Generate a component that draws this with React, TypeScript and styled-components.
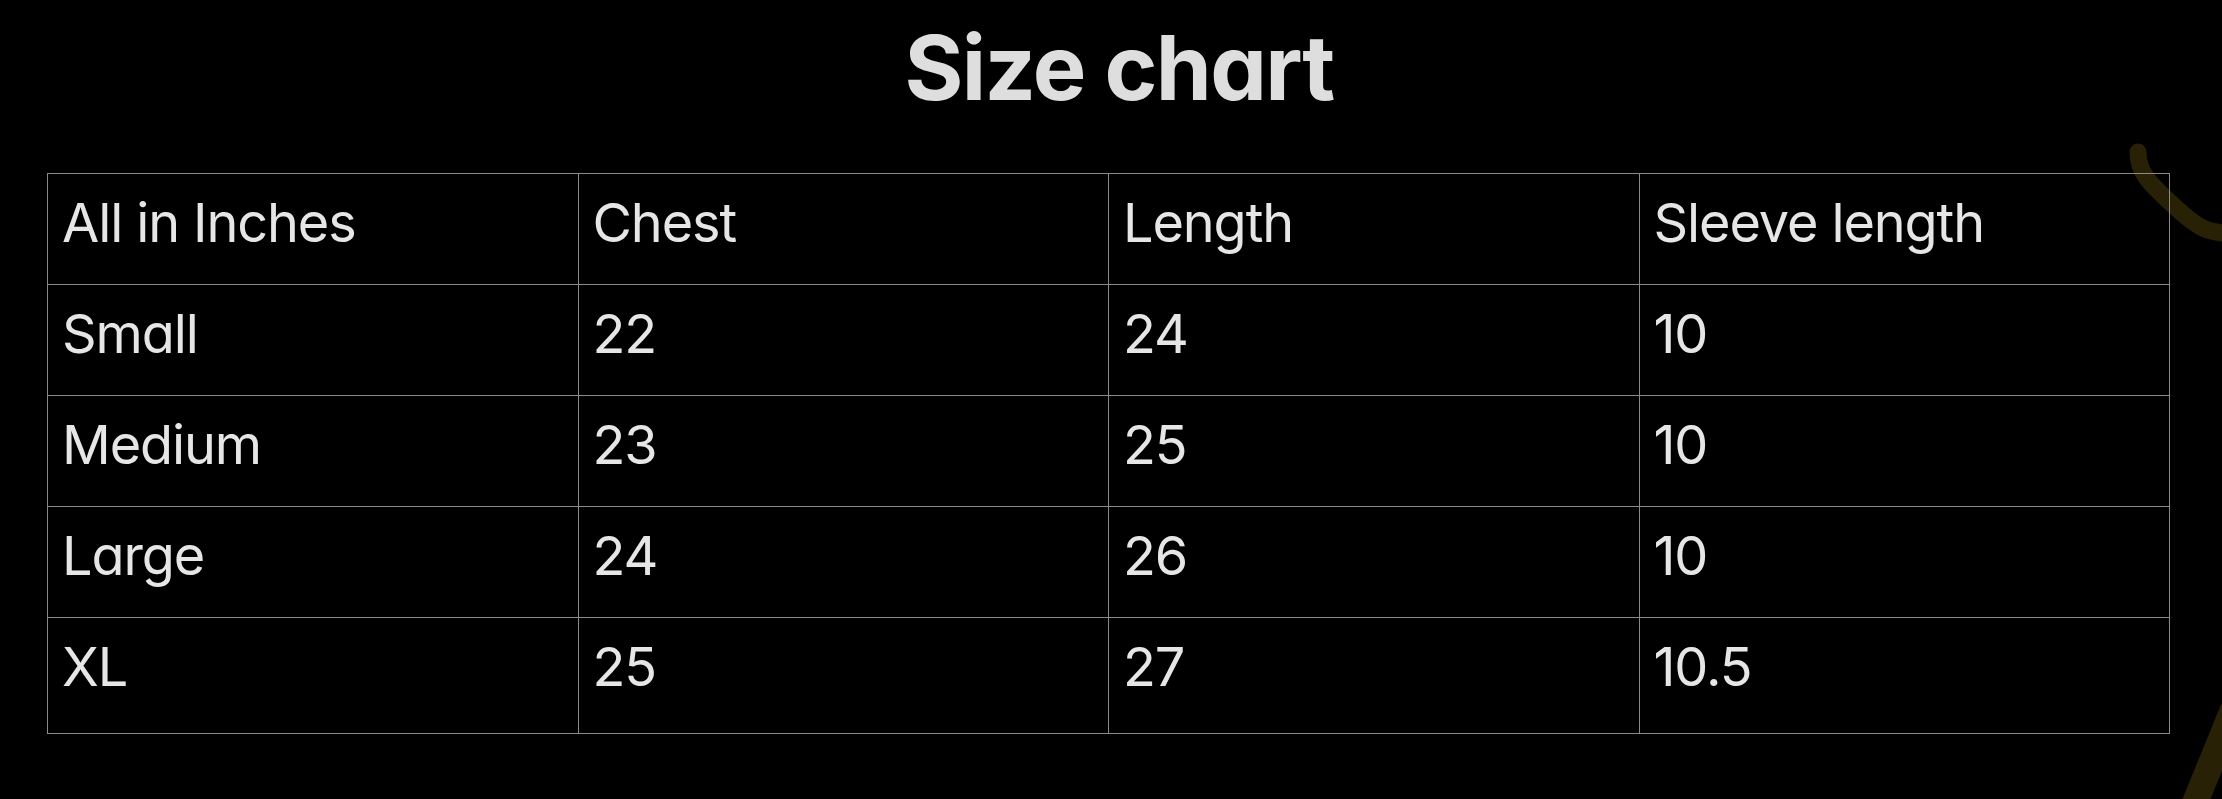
import React from "react";
import styled, { createGlobalStyle } from "styled-components";

const GlobalStyle = createGlobalStyle`
  html, body {
    margin: 0;
    padding: 0;
    background: #000;
  }
  body {
    font-family: Inter, "Noto Sans", "Liberation Sans", sans-serif;
    font-feature-settings: "cv11" 1;
    color: #e6e6e6;
  }
`

const Page = styled.div`
  position: relative;
  width: 2222px;
  height: 799px;
  overflow: hidden;
  background: #000;
`

const Title = styled.h1`
  margin: 0;
  padding: 13px 0 0 16px;
  text-align: center;
  font-size: 90px;
  line-height: 109px;
  font-weight: 700;
  color: #dedede;
  letter-spacing: -1.6px;
`

const Table = styled.table`
  position: relative;
  z-index: 1;
  margin: 51px 0 0 47px;
  width: 2123px;
  border-collapse: collapse;
  table-layout: fixed;
`

const Cell = styled.td<{ $h: number }>`
  height: ${p => p.$h}px;
  box-sizing: border-box;
  padding: 16px 14px 0;
  vertical-align: top;
  border: 1px solid #8a8a8a;
  font-size: 54px;
  line-height: 66px;
  font-weight: 400;
  letter-spacing: -1.1px;
  color: #e6e6e6;
  white-space: nowrap;
`

const Stroke = styled.svg`
  position: absolute;
  top: 0;
  right: 0;
  pointer-events: none;
`

const rows = [
  ["All in Inches", "Chest", "Length", "Sleeve length"],
  ["Small", "22", "24", "10"],
  ["Medium", "23", "25", "10"],
  ["Large", "24", "26", "10"],
  ["XL", "25", "27", "10.5"],
]

export default function App() {
  return (
    <Page>
      <GlobalStyle />
      <Stroke width="140" height="799" viewBox="0 0 140 799">
        <path d="M56 152 C 56 172, 66 182, 92 206 S 125 232, 150 234" stroke="#282106" strokeWidth="17" strokeLinecap="round" fill="none" />
        <path d="M150 712 L 110 810" stroke="#282106" strokeWidth="26" strokeLinecap="round" fill="none" />
      </Stroke>
      <Title>Size chart</Title>
      <Table>
        <tbody>
          {rows.map((r, i) => (
            <tr key={i}>
              {r.map((c, j) => (
                <Cell key={j} $h={i === rows.length - 1 ? 116 : 111}>{c}</Cell>
              ))}
            </tr>
          ))}
        </tbody>
      </Table>
    </Page>
  );
}
